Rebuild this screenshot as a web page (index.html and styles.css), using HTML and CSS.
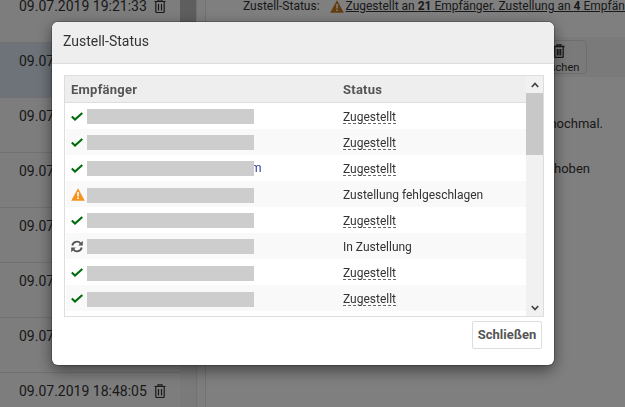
FILE: index.html
```html
<!DOCTYPE html>
<html lang="de">
<head>
<meta charset="utf-8">
<title>Zustell-Status</title>
<link rel="stylesheet" href="styles.css">
</head>
<body>
<div class="page">
  <aside class="list">
    <div class="list-row"><span>09.07.2019 19:21:33</span>
      <svg class="trash" viewBox="0 0 12 14"><path d="M.5 2.500h11M4 2.500V.8h4v1.700M1.800 2.500v10a1 1 0 0 0 1 1h6.400a1 1 0 0 0 1-1v-10M4.500 5v6.500M7.500 5v6.500" fill="none" stroke="currentColor" stroke-width="1.200"/></svg></div>
    <div class="list-row selected"><span>09.07.2019 19:15:20</span></div>
    <div class="list-row"><span>09.07.2019 19:10:12</span></div>
    <div class="list-row"><span>09.07.2019 19:05:47</span></div>
    <div class="list-row"><span>09.07.2019 19:01:03</span></div>
    <div class="list-row"><span>09.07.2019 18:58:31</span></div>
    <div class="list-row"><span>09.07.2019 18:52:16</span></div>
    <div class="list-row"><span>09.07.2019 18:48:05</span>
      <svg class="trash" viewBox="0 0 12 14"><path d="M.5 2.500h11M4 2.500V.8h4v1.700M1.800 2.500v10a1 1 0 0 0 1 1h6.400a1 1 0 0 0 1-1v-10M4.500 5v6.500M7.500 5v6.500" fill="none" stroke="currentColor" stroke-width="1.200"/></svg></div>
  </aside>
  <div class="list-scroll"><div class="list-thumb"></div></div>
  <div class="splitter"></div>
  <main class="detail">
    <div class="detail-status">
      <span class="status-label">Zustell-Status:</span>
      <svg class="warn-bg" viewBox="0 0 14 13"><path d="M7 .3l6.800 12.400H.2z" fill="#c77a1c"/><path d="M6.200 4h1.600v4.500H6.200zM6.200 9.500h1.600v1.500H6.200z" fill="#fff"/></svg>
      <span class="status-link">Zugestellt an <b>21</b> Empfänger. Zustellung an <b>4</b> Empfänger fehlgeschlagen</span>
    </div>
    <div class="detail-toolbar">
      <div class="tool-btn">
        <svg class="tool-icon" viewBox="0 0 12 14"><path d="M.5 2.500h11M4 2.500V.8h4v1.700M1.800 2.500v10a1 1 0 0 0 1 1h6.400a1 1 0 0 0 1-1v-10M4.300 5v6.500M6 5v6.500M7.700 5v6.500" fill="none" stroke="currentColor" stroke-width="1.300"/></svg>
        <span>Löschen</span>
      </div>
    </div>
    <p class="detail-line one">Bitte versuchen Sie es später nochmal.</p>
    <p class="detail-line two">Die Zustellung wurde verschoben</p>
  </main>
</div>
<div class="overlay"></div>
<div class="modal">
  <header class="modal-head">Zustell-Status</header>
  <div class="modal-body">
    <div class="table-box">
      <div class="table-main">
        <div class="row head"><div class="c1">Empfänger</div><div class="c2">Status</div></div>
        <div class="row"><div class="c1"><svg class="ok" viewBox="0 0 12 9"><path d="M.8 4.500l3.200 3L11.300 1" fill="none" stroke="#006b0c" stroke-width="2.100"/></svg><i class="mask"></i></div><div class="c2"><u>Zugestellt</u></div></div>
        <div class="row alt"><div class="c1"><svg class="ok" viewBox="0 0 12 9"><path d="M.8 4.500l3.200 3L11.300 1" fill="none" stroke="#006b0c" stroke-width="2.100"/></svg><i class="mask"></i></div><div class="c2"><u>Zugestellt</u></div></div>
        <div class="row"><div class="c1"><svg class="ok" viewBox="0 0 12 9"><path d="M.8 4.500l3.200 3L11.300 1" fill="none" stroke="#006b0c" stroke-width="2.100"/></svg><i class="mask"></i><span class="tail">m</span></div><div class="c2"><u>Zugestellt</u></div></div>
        <div class="row alt"><div class="c1"><svg class="warn" viewBox="0 0 14 13"><path d="M7 .3l6.800 12.400H.2z" fill="#f7931e"/><path d="M6.200 4h1.600v4.500H6.200zM6.200 9.500h1.600v1.500H6.200z" fill="#fff"/></svg><i class="mask low"></i></div><div class="c2">Zustellung fehlgeschlagen</div></div>
        <div class="row"><div class="c1"><svg class="ok" viewBox="0 0 12 9"><path d="M.8 4.500l3.200 3L11.300 1" fill="none" stroke="#006b0c" stroke-width="2.100"/></svg><i class="mask"></i></div><div class="c2"><u>Zugestellt</u></div></div>
        <div class="row alt"><div class="c1"><svg class="sync" viewBox="0 0 12 13"><path d="M1.300 5.500A4.800 4.800 0 0 1 9.600 3.300M10.700 7.500A4.800 4.800 0 0 1 2.400 9.700" fill="none" stroke="#555" stroke-width="1.900"/><path d="M11.800 .8v4.600H7.200zM.2 12.200V7.600h4.600z" fill="#555"/></svg><i class="mask"></i></div><div class="c2">In Zustellung</div></div>
        <div class="row"><div class="c1"><svg class="ok" viewBox="0 0 12 9"><path d="M.8 4.500l3.200 3L11.300 1" fill="none" stroke="#006b0c" stroke-width="2.100"/></svg><i class="mask low"></i></div><div class="c2"><u>Zugestellt</u></div></div>
        <div class="row alt"><div class="c1"><svg class="ok" viewBox="0 0 12 9"><path d="M.8 4.500l3.200 3L11.300 1" fill="none" stroke="#006b0c" stroke-width="2.100"/></svg><i class="mask low"></i></div><div class="c2"><u>Zugestellt</u></div></div>
      </div>
      <div class="scrollbar">
        <svg class="arrow" viewBox="0 0 8 6"><path d="M.8 5L4 1.500 7.200 5" fill="none" stroke="#444" stroke-width="1.700"/></svg>
        <div class="thumb"></div>
        <svg class="arrow down" viewBox="0 0 8 6"><path d="M.8 1L4 4.500 7.200 1" fill="none" stroke="#444" stroke-width="1.700"/></svg>
      </div>
    </div>
    <div class="modal-foot"><button class="close-btn">Schließen</button></div>
  </div>
</div>
</body>
</html>
```
FILE: styles.css
```css
* { box-sizing: border-box; }
html, body { margin: 0; height: 100%; overflow: hidden; }
body { font-family: Roboto, "Liberation Sans", sans-serif; font-size: 12px; color: #333; background: #fff; }
.page { display: flex; height: 407px; width: 625px; overflow: hidden; }
.list { width: 180px; flex: none; margin-top: -12px; }
.list-row { height: 55px; padding: 9px 0 0 19px; display: flex; gap: 7px; align-items: flex-start; font-size: 14px; line-height: 18px; border-bottom: 1px solid #e2e2e2; background: #fbfbfb; color: #333; }
.list-row.selected { background: #dce6f2; }
.trash { width: 12px; height: 14px; margin-top: 2px; flex: none; }
.list-scroll { width: 16px; flex: none; background: #f4f4f4; }
.list-thumb { height: 30px; background: #bcbcbc; }
.splitter { width: 10px; flex: none; background: #fbfbfb; border-left: 1px solid #e4e4e4; border-right: 1px solid #e4e4e4; }
.detail { flex: 1; min-width: 0; background: #fff; overflow: hidden; white-space: nowrap; }
.detail-status { height: 37px; padding-left: 37px; display: flex; align-items: flex-start; line-height: 12px; }
.status-link { text-decoration: underline; }
.warn-bg { width: 14px; height: 13px; flex: none; margin: 0 2px 0 10px; }
.detail-toolbar { height: 40px; background: #f5f5f5; padding: 3px 0 0 324px; }
.tool-btn { width: 57px; height: 34px; border: 1px solid #ddd; border-radius: 4px; font-size: 11px; display: flex; flex-direction: column; align-items: center; padding-top: 3px; line-height: 13px; gap: 3px; }
.tool-icon { width: 12px; height: 14px; flex: none; }
.detail-line { display: flex; justify-content: flex-end; margin: 0; padding-right: 22px; font-size: 13px; line-height: 16px; }
.detail-line.one { margin-top: 39px; }
.detail-line.two { margin-top: 29px; padding-right: 35px; }
.overlay { position: fixed; inset: 0; background: rgba(0,0,0,.5); }
.modal { position: fixed; left: 52px; top: 22px; width: 502px; height: 343px; background: #fff; border-radius: 6px; box-shadow: 0 0 0 1px rgba(0,0,0,.2), 0 5px 15px rgba(0,0,0,.5); overflow: hidden; }
.modal-head { height: 42px; background: #eee; border-bottom: 1px solid #ddd; padding: 0 11px; font-size: 14px; line-height: 39px; color: #333; }
.modal-body { padding: 11px 10px 0 12px; }
.table-box { display: flex; height: 242px; border: 1px solid #ddd; }
.table-main { flex: 1; min-width: 0; }
.row { display: flex; height: 26px; line-height: 28px; margin-left: 1px; }
.row.alt { background: #f9f9f9; }
.row.head { height: 27px; margin-left: 0; background: #eee; border-bottom: 1px solid #ddd; font-weight: 700; font-size: 13px; letter-spacing: .25px; color: #555; }
.row.head .c1 { padding-left: 6px; width: 273px; }
.c1 { width: 272px; padding-left: 5px; display: flex; align-items: flex-start; flex: none; }
.c2 { padding-left: 5px; }
.c1 svg { flex: none; margin-right: 4px; }
.ok { width: 12px; height: 9px; margin-top: 9px; }
.warn { width: 14px; height: 13px; margin-top: 7px; margin-right: 2px !important; }
.sync { width: 12px; height: 13px; margin-top: 7px; }
.mask { width: 167px; height: 15px; margin-top: 6px; background: #cdcdcd; flex: none; z-index: 1; }
.mask.low { margin-top: 7px; }
.tail { color: #2c3a9c; margin-left: -3px; line-height: 26px; }
u { text-decoration: underline dashed #666 1px; text-underline-offset: 2px; }
.scrollbar { width: 17px; flex: none; background: #f1f1f1; display: flex; flex-direction: column; align-items: center; }
.arrow { width: 8px; height: 6px; margin: 6px 0 5px; flex: none; }
.thumb { width: 100%; height: 62px; background: #c8c8c8; }
.arrow.down { margin: auto 0 5px; }
.modal-foot { display: flex; justify-content: flex-end; padding: 4px 2px 0 0; }
.close-btn { width: 70px; height: 28px; background: #fff; border: 1px solid #ddd; border-radius: 2px; font: 700 13px Roboto, sans-serif; color: #555; padding: 0 0 2px; }
```
